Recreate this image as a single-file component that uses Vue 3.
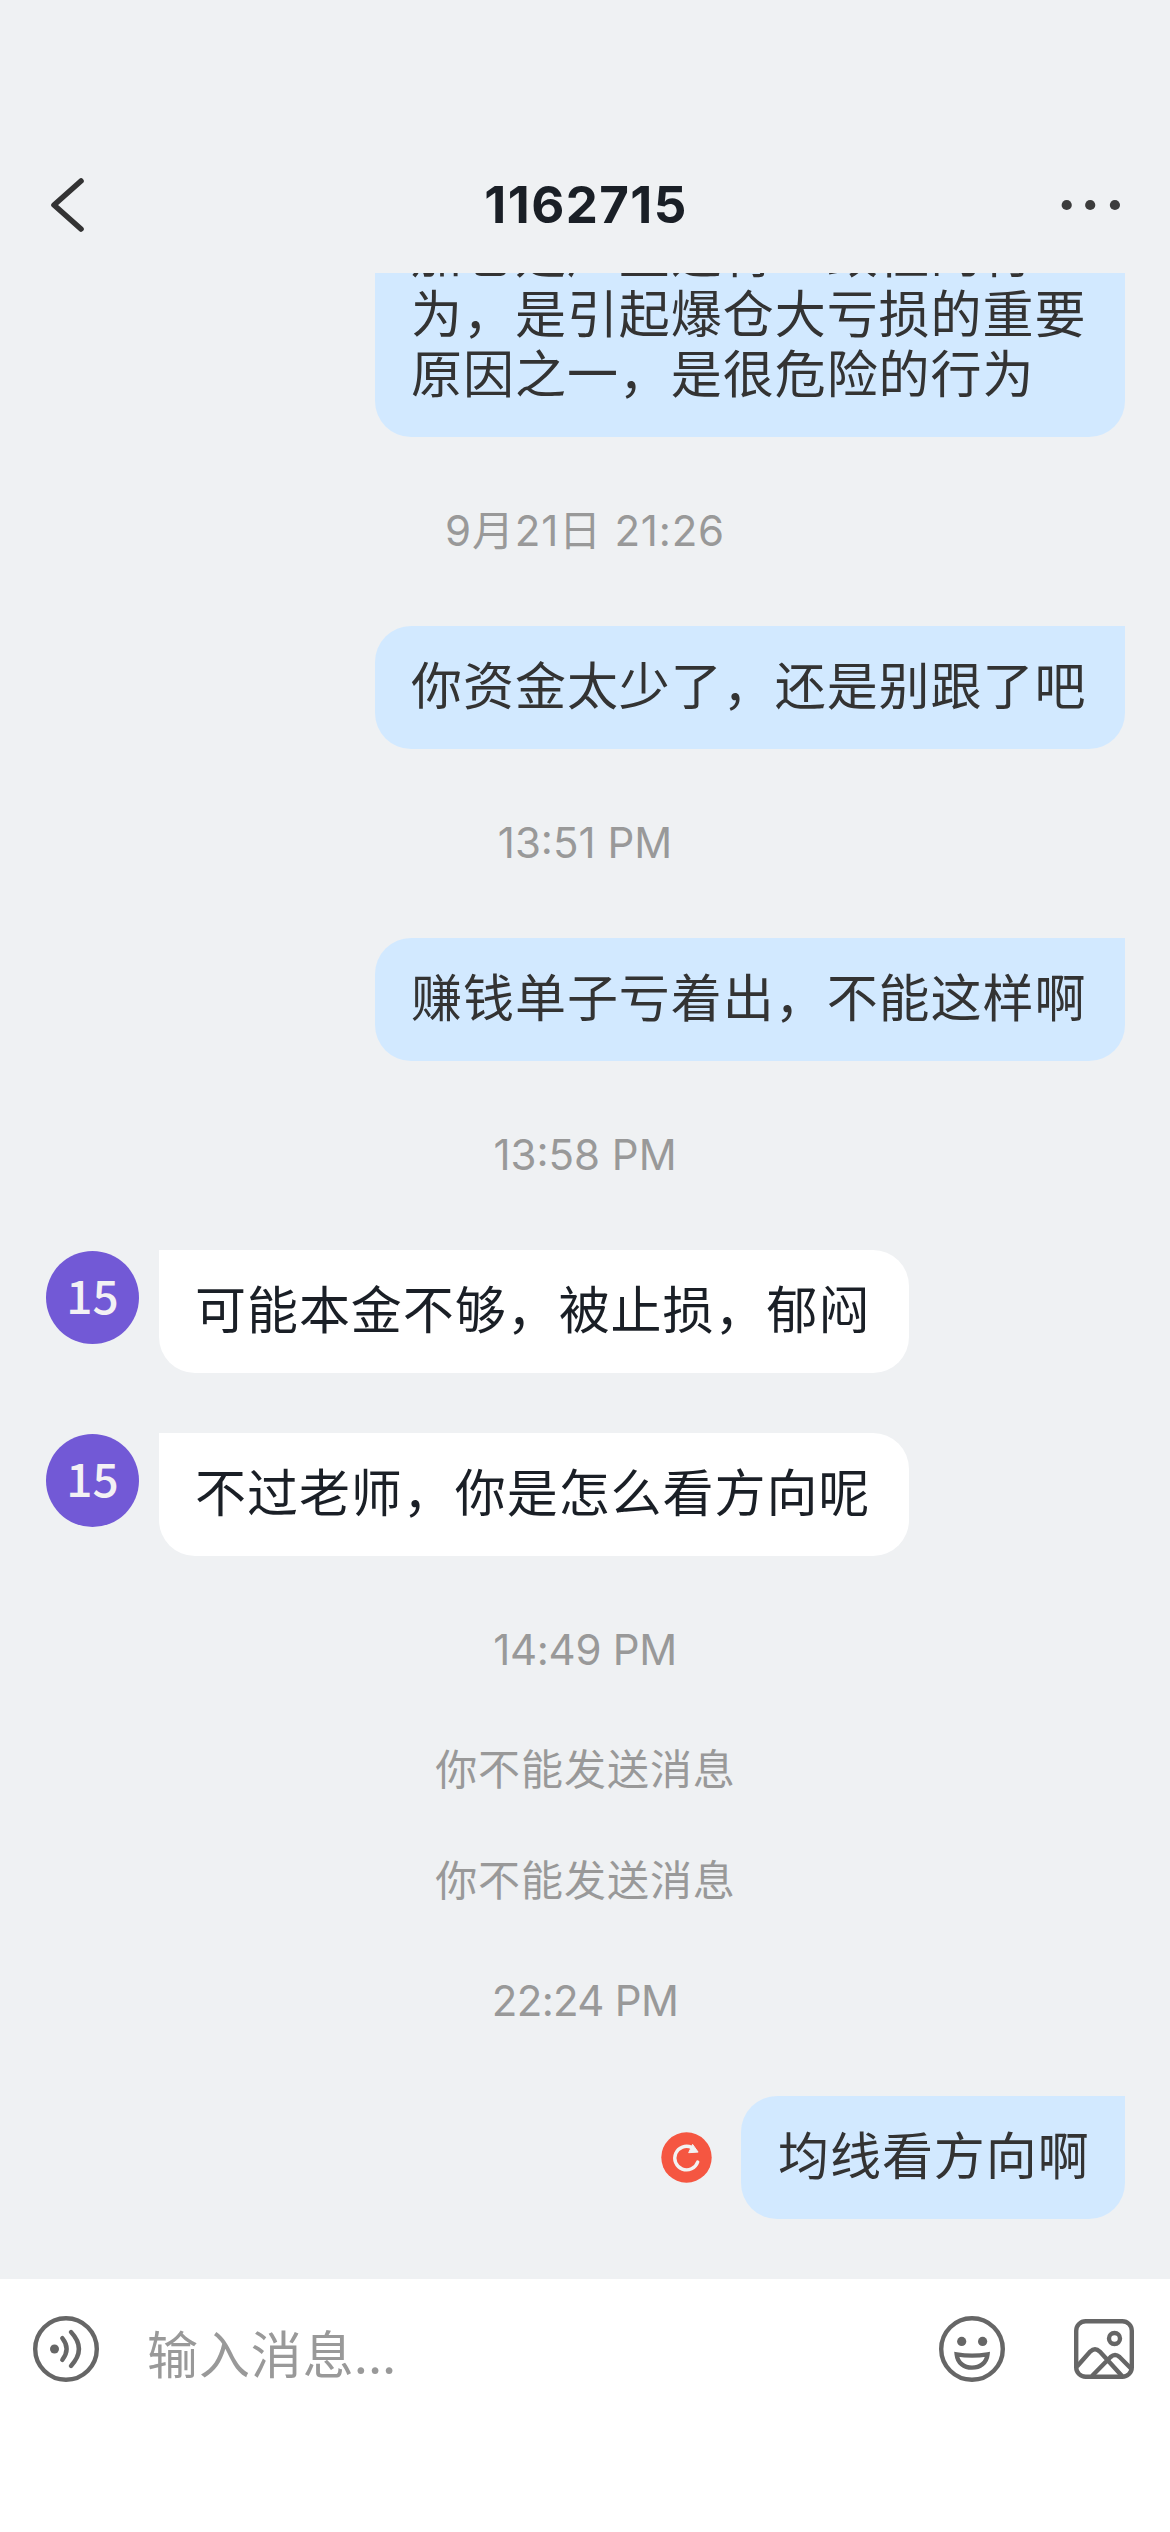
<script setup>
const items = [
  { type: 'out', text: '加仓是严重违背一致性的行\n为，是引起爆仓大亏损的重要\n原因之一，是很危险的行为' },
  { type: 'time', text: '9月21日 21:26', fit: 'wide' },
  { type: 'out', text: '你资金太少了，还是别跟了吧' },
  { type: 'time', text: '13:51 PM' },
  { type: 'out', text: '赚钱单子亏着出，不能这样啊' },
  { type: 'time', text: '13:58 PM' },
  { type: 'in', text: '可能本金不够，被止损，郁闷' },
  { type: 'in', text: '不过老师，你是怎么看方向呢' },
  { type: 'time', text: '14:49 PM', fit: 'snug' },
  { type: 'notice', text: '你不能发送消息' },
  { type: 'notice', text: '你不能发送消息' },
  { type: 'time', text: '22:24 PM', fit: 'tight' },
  { type: 'out', text: '均线看方向啊', failed: true },
]
</script>

<template>
  <div class="screen">
    <header class="header">
      <svg class="back" width="40" height="60" viewBox="0 0 40 60" fill="none" stroke="#333" stroke-width="5.6" stroke-linecap="round" stroke-linejoin="round">
        <path d="M33 6 6 30l27 24" />
      </svg>
      <h1 class="title">1162715</h1>
      <svg class="more" width="60" height="12" viewBox="0 0 60 12" fill="#3c3c3c">
        <circle cx="5.7" cy="6" r="5.1" /><circle cx="29.2" cy="6" r="5.1" /><circle cx="53.9" cy="6" r="5.1" />
      </svg>
    </header>

    <main class="chat">
      <div v-for="(item, i) in items" :key="i" class="row" :class="[item.type, item.fit, { failed: item.failed }]">
        <div v-if="item.type === 'in'" class="avatar">15</div>
        <svg v-if="item.failed" class="retry" width="51" height="51" viewBox="0 0 51 51">
          <circle cx="25.5" cy="25.5" r="25.2" fill="#f55641" />
          <path d="M36.7 30A11.8 11.8 0 1 1 30.6 15.4" fill="none" stroke="#f2f2f2" stroke-width="3.4" stroke-linecap="round" />
          <path d="m31.6 12.4 5.5 7.7-9.4.6z" fill="#f2f2f2" stroke="#f2f2f2" stroke-linejoin="round" />
        </svg>
        <div class="text">{{ item.text }}</div>
      </div>
    </main>

    <footer class="composer">
      <svg class="voice" width="66" height="66" viewBox="0 0 66 66" fill="none" stroke="#666" stroke-width="4.4" stroke-linecap="round">
        <circle cx="33" cy="33" r="30.8" />
        <circle cx="21.5" cy="33" r="4.5" fill="#666" stroke="none" />
        <path d="M29.3 22.2q8.6 10.8 0 21.6M38 16.1q15.8 16.9 0 33.8" />
      </svg>
      <span class="placeholder">输入消息<span class="dots">...</span></span>
      <svg class="smile" width="66" height="66" viewBox="0 0 66 66" fill="none" stroke="#666" stroke-width="4.4">
        <circle cx="33" cy="33" r="30.8" />
        <circle cx="22.7" cy="25.4" r="4.6" fill="#666" stroke="none" />
        <circle cx="43.6" cy="25.4" r="4.6" fill="#666" stroke="none" />
        <path d="M17.7 38.4q15.3 2.4 30.8 0C47.5 47 41 51.6 33 51.6S18.6 47 17.7 38.4Z" />
      </svg>
      <svg class="photo" width="60" height="60" viewBox="0 0 60 60" fill="none" stroke="#666" stroke-width="4.4">
        <rect x="2.2" y="2.2" width="55.6" height="55.6" rx="9.5" />
        <circle cx="40.5" cy="19.5" r="5.5" />
        <path d="M3 47.5 16.2 32.6Q21 28 25.8 32.6L48 57M18 57 36.6 38Q41 34 45.6 38L57.5 50" />
      </svg>
    </footer>
  </div>
</template>

<style>
body {
  margin: 0;
}
</style>

<style scoped>
.screen {
  display: flex;
  flex-direction: column;
  width: 1170px;
  height: 2532px;
  overflow: hidden;
  background: #eff1f3;
  color: #333;
  font-family: Inter, "Noto Sans CJK SC", sans-serif;
}
.header {
  flex: none;
  box-sizing: border-box;
  display: flex;
  align-items: center;
  justify-content: space-between;
  height: 273px;
  padding: 139px 49px 2px 48px;
}
.title {
  margin: 0;
  padding-left: 23px;
  font-size: 51px;
  font-weight: 700;
  line-height: 60px;
  letter-spacing: 1.4px;
  color: #1a1f26;
}
.chat {
  flex: 1;
  min-height: 0;
  box-sizing: border-box;
  overflow: hidden;
  display: flex;
  flex-direction: column;
  justify-content: flex-end;
  gap: 60px;
  padding: 0 45px 60px;
}
.row {
  flex: none;
  display: flex;
  align-items: flex-start;
}
.time {
  box-sizing: border-box;
  height: 69px;
  padding-bottom: 2px;
  align-items: center;
  justify-content: center;
}
.notice {
  box-sizing: border-box;
  height: 51px;
  padding: 0 0 2px 1px;
  align-items: center;
  justify-content: center;
}
.time .text,
.notice .text {
  font-size: 42px;
  line-height: 50px;
  color: #999;
}
.notice .text {
  letter-spacing: 0.95px;
}
.wide .text {
  letter-spacing: 0.8px;
}
.snug .text {
  letter-spacing: -0.3px;
}
.tight .text {
  letter-spacing: -0.7px;
}
.out {
  justify-content: flex-end;
  align-items: center;
}
.out .text,
.in .text {
  box-sizing: border-box;
  padding: 31px 38.6px 32px 36px;
  border-radius: 36px 0 36px 36px;
  background: #d2e9ff;
  font-size: 51px;
  line-height: 60px;
  letter-spacing: 0.95px;
  white-space: pre;
}
.failed .text {
  padding-right: 35.3px;
  padding-left: 37px;
}
.in .text {
  border-radius: 0 36px 36px 36px;
  background: #fff;
  color: #1a1f26;
}
.avatar {
  width: 93px;
  height: 93px;
  margin: 1px 20px 0 1px;
  border-radius: 50%;
  background: #7259d6;
  color: #f3f1f4;
  font: 500 46px/87px "Noto Sans CJK SC", sans-serif;
  text-align: center;
}
.retry {
  margin-right: 29px;
}
.composer {
  flex: none;
  box-sizing: border-box;
  display: flex;
  align-items: flex-start;
  height: 253px;
  padding: 37px 36px 0 33px;
  background: #fff;
}
.placeholder {
  flex: 1;
  margin: 10px 0 0 48px;
  font-size: 51px;
  line-height: 60px;
  letter-spacing: 0.9px;
  color: #999;
}
.dots {
  margin-left: -1px;
  letter-spacing: -0.6px;
}
.photo {
  margin: 3px 0 0 69px;
}
</style>
